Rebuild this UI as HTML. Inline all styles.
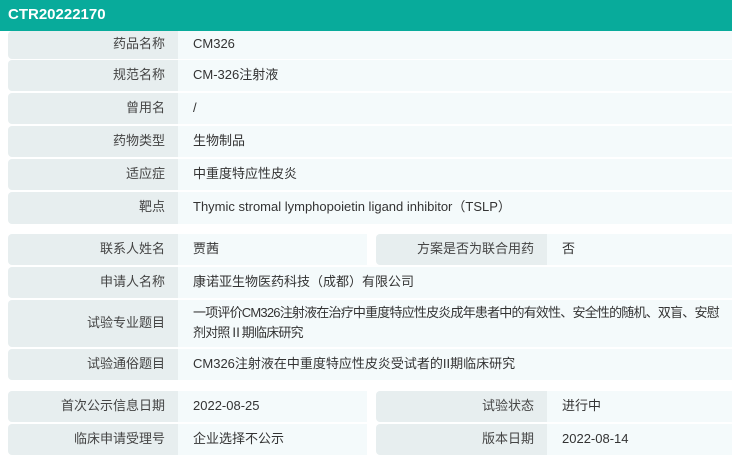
<!DOCTYPE html>
<html><head><meta charset="utf-8"><style>
*{margin:0;padding:0;box-sizing:border-box}
body{width:732px;height:454px;overflow:hidden;background:#fff;font-family:"Liberation Sans","Noto Sans CJK SC",sans-serif;font-size:13px;color:#333;position:relative}
.hd{position:absolute;left:0;top:0;width:732px;height:31px;background:#08ab9b;color:#fff;font-weight:bold;font-size:15px;line-height:29px;padding-left:8px}
.r{position:absolute;display:flex}
.l{background:#e7eeef;text-align:right;padding-right:13px;display:flex;align-items:center;justify-content:flex-end;border-radius:4px 0 0 4px;color:#444;line-height:18px}
.v{background:#f4fafb;padding-left:15px;display:flex;align-items:center;line-height:18px}
.v span,.l span{position:relative;top:-1px}
</style></head><body>
<div class="hd">CTR20222170</div>
<div class="r" style="left:8px;top:31px;height:28px"><div class="l" style="width:170px"><span>药品名称</span></div><div class="v" style="width:554px"><span>CM326</span></div></div>
<div class="r" style="left:8px;top:60px;height:31px"><div class="l" style="width:170px"><span>规范名称</span></div><div class="v" style="width:554px"><span>CM-326注射液</span></div></div>
<div class="r" style="left:8px;top:93px;height:31px"><div class="l" style="width:170px"><span>曾用名</span></div><div class="v" style="width:554px"><span>/</span></div></div>
<div class="r" style="left:8px;top:126px;height:31px"><div class="l" style="width:170px"><span>药物类型</span></div><div class="v" style="width:554px"><span>生物制品</span></div></div>
<div class="r" style="left:8px;top:159px;height:31px"><div class="l" style="width:170px"><span>适应症</span></div><div class="v" style="width:554px"><span>中重度特应性皮炎</span></div></div>
<div class="r" style="left:8px;top:192px;height:32px"><div class="l" style="width:170px"><span>靶点</span></div><div class="v" style="width:554px"><span>Thymic stromal lymphopoietin ligand inhibitor（TSLP）</span></div></div>

<div class="r" style="left:8px;top:234px;height:31px"><div class="l" style="width:170px"><span>联系人姓名</span></div><div class="v" style="width:189px"><span>贾茜</span></div></div>
<div class="r" style="left:376px;top:234px;height:31px"><div class="l" style="width:171px"><span>方案是否为联合用药</span></div><div class="v" style="width:185px"><span>否</span></div></div>
<div class="r" style="left:8px;top:267px;height:31px"><div class="l" style="width:170px"><span>申请人名称</span></div><div class="v" style="width:554px"><span>康诺亚生物医药科技（成都）有限公司</span></div></div>
<div class="r" style="left:8px;top:300px;height:47px"><div class="l" style="width:170px"><span>试验专业题目</span></div><div class="v" style="width:554px;white-space:nowrap;letter-spacing:-0.8px;line-height:20px"><span>一项评价CM326注射液在治疗中重度特应性皮炎成年患者中的有效性、安全性的随机、双盲、安慰<br>剂对照Ⅱ期临床研究</span></div></div>
<div class="r" style="left:8px;top:349px;height:31px"><div class="l" style="width:170px"><span>试验通俗题目</span></div><div class="v" style="width:554px"><span>CM326注射液在中重度特应性皮炎受试者的II期临床研究</span></div></div>

<div class="r" style="left:8px;top:391px;height:31px"><div class="l" style="width:170px"><span>首次公示信息日期</span></div><div class="v" style="width:189px"><span>2022-08-25</span></div></div>
<div class="r" style="left:376px;top:391px;height:31px"><div class="l" style="width:171px"><span>试验状态</span></div><div class="v" style="width:185px"><span>进行中</span></div></div>
<div class="r" style="left:8px;top:424px;height:31px"><div class="l" style="width:170px"><span>临床申请受理号</span></div><div class="v" style="width:189px"><span>企业选择不公示</span></div></div>
<div class="r" style="left:376px;top:424px;height:31px"><div class="l" style="width:171px"><span>版本日期</span></div><div class="v" style="width:185px"><span>2022-08-14</span></div></div>
</body></html>
